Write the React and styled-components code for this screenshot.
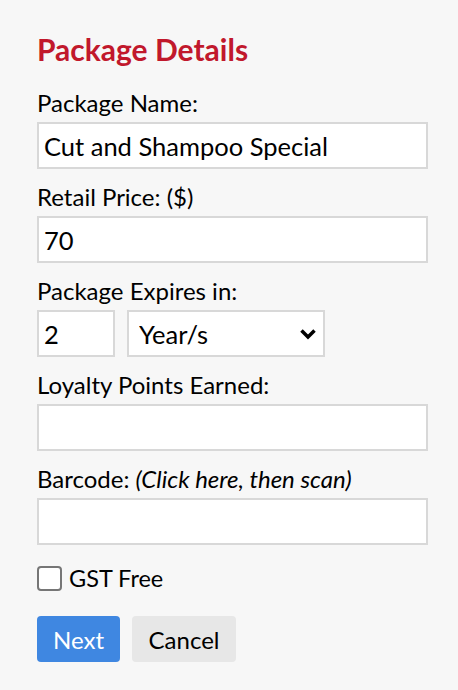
import styled, { createGlobalStyle } from "styled-components";

const GlobalStyle = createGlobalStyle`
  body {
    margin: 0;
    background: #f7f7f7;
    font-family: Lato, "Liberation Sans", sans-serif;
    color: #000;
  }
`;

function App() {
  return (
    <>
      <GlobalStyle />
      <Form>
        <Title>Package Details</Title>
        <Field>
          <Label>Package Name:</Label>
          <TextInput defaultValue="Cut and Shampoo Special" />
        </Field>
        <Field>
          <Label>Retail Price: ($)</Label>
          <TextInput defaultValue="70" />
        </Field>
        <Field>
          <Label>Package Expires in:</Label>
          <Row>
            <TextInput $width="78px" defaultValue="2" />
            <SelectWrap>
              <Select defaultValue="year">
                <option value="day">Day/s</option>
                <option value="month">Month/s</option>
                <option value="year">Year/s</option>
              </Select>
              <Chevron viewBox="0 0 18 12">
                <path d="M2.5 2.5 L9 9 L15.5 2.5" />
              </Chevron>
            </SelectWrap>
          </Row>
        </Field>
        <Field>
          <Label>Loyalty Points Earned:</Label>
          <TextInput />
        </Field>
        <Field>
          <Label>
            Barcode: <em>(Click here, then scan)</em>
          </Label>
          <TextInput />
        </Field>
        <CheckRow>
          <Checkbox type="checkbox" />
          GST Free
        </CheckRow>
        <Buttons>
          <Button $primary>Next</Button>
          <Button>Cancel</Button>
        </Buttons>
      </Form>
    </>
  );
}

const Form = styled.div`
  width: 391px;
  padding: 31px 0 0 37px;
  display: flex;
  flex-direction: column;
`;

const Title = styled.h2`
  margin: 0 0 22px;
  font-size: 30px;
  line-height: 36px;
  font-weight: 700;
  color: #c1182c;
`;

const Field = styled.div`
  display: flex;
  flex-direction: column;
  margin-bottom: 14px;
`;

const Label = styled.label`
  font-size: 24px;
  line-height: 27px;
  margin-bottom: 6px;
  em {
    font-style: italic;
  }
`;

const TextInput = styled.input`
  box-sizing: border-box;
  width: ${(p) => p.$width || "100%"};
  height: 47px;
  border: 2px solid #d8d8d8;
  background: #fff;
  padding: 0 5px;
  font-family: Lato, "Liberation Sans", sans-serif;
  font-size: 25.5px;
  color: #000;
  outline: none;
`;

const Row = styled.div`
  display: flex;
  gap: 12px;
`;

const SelectWrap = styled.div`
  position: relative;
  width: 198px;
`;

const Select = styled.select`
  box-sizing: border-box;
  appearance: none;
  width: 100%;
  height: 47px;
  border: 2px solid #d8d8d8;
  border-radius: 0;
  background: #fff;
  padding: 0 0 0 10px;
  font-family: Lato, "Liberation Sans", sans-serif;
  font-size: 25.5px;
  color: #000;
  outline: none;
`;

const Chevron = styled.svg`
  position: absolute;
  right: 8px;
  top: 18px;
  width: 18px;
  height: 12px;
  pointer-events: none;
  path {
    fill: none;
    stroke: #000;
    stroke-width: 3.5;
  }
`;

const CheckRow = styled.label`
  display: flex;
  align-items: center;
  gap: 7px;
  font-size: 23.5px;
  margin: 5px 0 24px;
`;

const Checkbox = styled.input`
  appearance: none;
  box-sizing: border-box;
  width: 25px;
  height: 25px;
  margin: 0;
  border: 2px solid #767676;
  border-radius: 4px;
  background: #fff;
`;

const Buttons = styled.div`
  display: flex;
  gap: 12px;
`;

const Button = styled.button`
  height: 46px;
  padding: 0 ${(p) => (p.$primary ? "16px" : "16.5px")};
  border: none;
  border-radius: 4px;
  background: ${(p) => (p.$primary ? "#3f87e1" : "#e7e7e7")};
  color: ${(p) => (p.$primary ? "#fff" : "#000")};
  font-family: Lato, "Liberation Sans", sans-serif;
  font-size: 24px;
`;

export default App;
